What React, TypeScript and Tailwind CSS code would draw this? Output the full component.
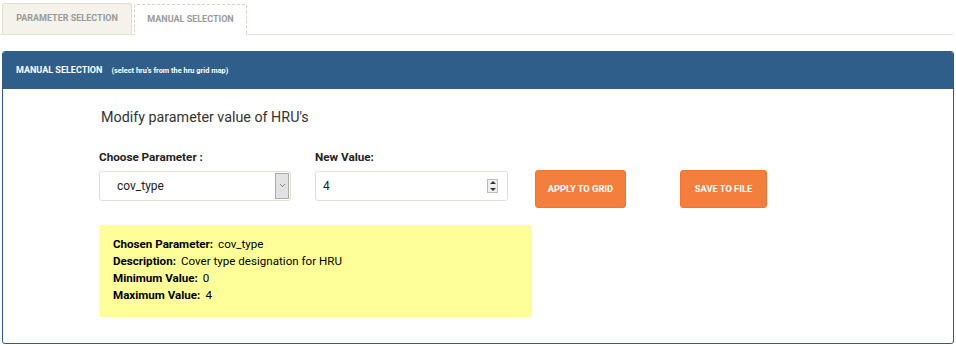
import { ChevronDown } from 'lucide-react';

const info = [
  { label: 'Chosen Parameter:', value: 'cov_type' },
  { label: 'Description:', value: 'Cover type designation for HRU' },
  { label: 'Minimum Value:', value: '0' },
  { label: 'Maximum Value:', value: '4' },
];

export default function App() {
  return (
    <div className="h-[346px] w-[956px] bg-white" style={{ fontFamily: 'Roboto, "Liberation Sans", sans-serif' }}>
      {/* tabs */}
      <div className="mr-[3px] flex items-end gap-[2px] border-b border-[#e4e0d8] pl-[2px] pt-[3px]">
        <div className="flex h-[31px] w-[130px] items-center justify-center rounded-t-[3px] border border-b-0 border-[#e3dccf] bg-[#f5f2ec] text-[9px] font-bold text-[#9a9a9a]">
          PARAMETER SELECTION
        </div>
        <div className="mb-[-1px] flex h-[31px] w-[113px] items-center justify-center rounded-t-[3px] border border-b-0 border-dashed border-[#d8d0c0] bg-white text-[9px] font-bold text-[#9a9a9a]">
          MANUAL SELECTION
        </div>
      </div>

      {/* panel */}
      <div className="mx-[2px] mt-[16px] h-[293px] w-[952px] overflow-hidden rounded-[3px] border border-[#2f5b86] bg-white">
        <div className="flex h-[37px] items-center gap-[9px] bg-[#305e8a] pl-[13px] text-white">
          <span className="text-[9px] font-bold">MANUAL SELECTION</span>
          <span className="text-[7.4px] font-bold">(select hru's from the hru grid map)</span>
        </div>

        <div className="pl-[96px] pt-[18px]">
          <h2 className="ml-[2px] text-[14.3px] text-[#333]">Modify parameter value of HRU's</h2>

          <div className="mt-[21px] flex h-[56px] items-start">
            <div className="flex w-[192px] flex-col">
              <label className="text-[11.7px] font-bold text-[#222]">Choose Parameter :</label>
              <div className="mt-[4px] flex h-[30px] items-center rounded-[3px] border border-[#e2ded6] bg-white pl-[17px] pr-[1px]">
                <span className="flex-1 text-[12px] text-[#222]">cov_type</span>
                <span className="flex h-[26px] w-[14px] items-center justify-center border border-[#aaa] bg-[#e2e2e2]">
                  <ChevronDown size={9} strokeWidth={2} className="text-[#555]" />
                </span>
              </div>
            </div>

            <div className="ml-[24px] flex w-[193px] flex-col">
              <label className="text-[11.7px] font-bold text-[#222]">New Value:</label>
              <div className="mt-[4px] flex h-[30px] items-center rounded-[3px] border border-[#e2ded6] bg-white pl-[7px] pr-[9px]">
                <span className="flex-1 text-[12px] text-[#222]">4</span>
                <span className="flex h-[14px] w-[11px] flex-col items-center justify-between border border-[#bbb] bg-[#f0f0f0] py-[1px]">
                  <span className="h-0 w-0 border-x-[3px] border-b-[3px] border-x-transparent border-b-[#333]" />
                  <span className="h-0 w-0 border-x-[3px] border-t-[3px] border-x-transparent border-t-[#333]" />
                </span>
              </div>
            </div>

            <button className="ml-[27px] mt-[21px] h-[38px] w-[91px] rounded-[3px] border border-[#ee7430] bg-[#f47e3e] text-[9.3px] font-bold text-white">
              APPLY TO GRID
            </button>
            <button className="ml-[54px] mt-[21px] h-[38px] w-[87px] rounded-[3px] border border-[#ee7430] bg-[#f47e3e] text-[9.3px] font-bold text-white">
              SAVE TO FILE
            </button>
          </div>

          <div className="mt-[20px] h-[92px] w-[433px] rounded-[3px] bg-[#ffff99] pl-[14px] pt-[11px]">
            {info.map((row) => (
              <div key={row.label} className="flex h-[17px] items-center gap-[5px] text-[11.6px] text-black">
                <span className="font-bold">{row.label}</span>
                <span>{row.value}</span>
              </div>
            ))}
          </div>
        </div>
      </div>
    </div>
  );
}
